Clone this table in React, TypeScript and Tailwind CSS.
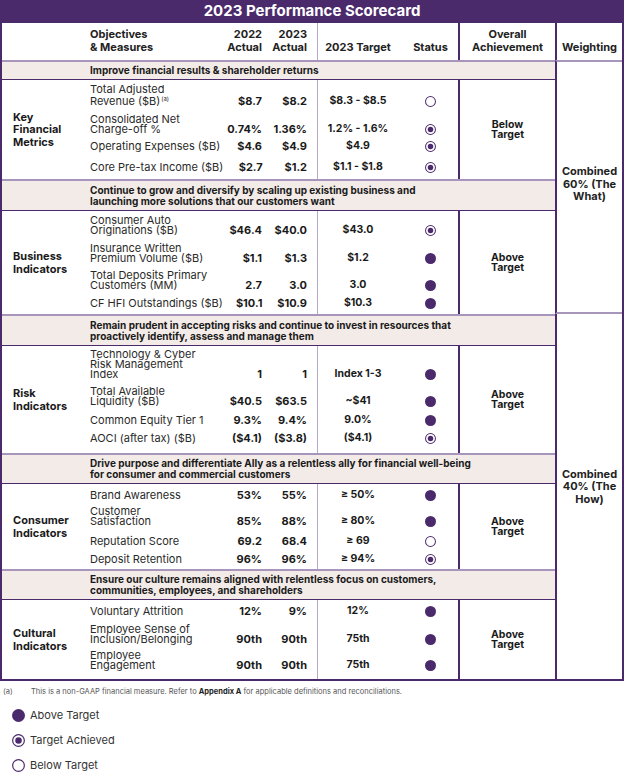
import React from "react";

type Status = "above" | "achieved" | "below";

interface Row {
  m: string[];
  sup?: string;
  a: string;
  b: string;
  t: string;
  s: Status;
  h: string;
}

interface Section {
  band: string[];
  bandH: string;
  cat: string[];
  overall: string[];
  pb: string;
  rows: Row[];
}

const sections: Section[] = [
  {
    band: ["Improve financial results & shareholder returns"],
    bandH: "h-[20px]",
    cat: ["Key", "Financial", "Metrics"],
    overall: ["Below", "Target"],
    pb: "pb-[5px]",
    rows: [
      { m: ["Total Adjusted", "Revenue ($B)"], sup: "(a)", a: "$8.7", b: "$8.2", t: "$8.3 - $8.5", s: "below", h: "h-[28px]" },
      { m: ["Consolidated Net", "Charge-off %"], a: "0.74%", b: "1.36%", t: "1.2% - 1.6%", s: "achieved", h: "h-[28px]" },
      { m: ["Operating Expenses ($B)"], a: "$4.6", b: "$4.9", t: "$4.9", s: "achieved", h: "h-[17px]" },
      { m: ["Core Pre-tax Income ($B)"], a: "$2.7", b: "$1.2", t: "$1.1 - $1.8", s: "achieved", h: "h-[21px]" },
    ],
  },
  {
    band: [
      "Continue to grow and diversify by scaling up existing business and",
      "launching more solutions that our customers want",
    ],
    bandH: "h-[32px]",
    cat: ["Business", "Indicators"],
    overall: ["Above", "Target"],
    pb: "pb-[4px]",
    rows: [
      { m: ["Consumer Auto", "Originations ($B)"], a: "$46.4", b: "$40.0", t: "$43.0", s: "achieved", h: "h-[26px]" },
      { m: ["Insurance Written", "Premium Volume ($B)"], a: "$1.1", b: "$1.3", t: "$1.2", s: "above", h: "h-[28px]" },
      { m: ["Total Deposits Primary", "Customers (MM)"], a: "2.7", b: "3.0", t: "3.0", s: "above", h: "h-[27px]" },
      { m: ["CF HFI Outstandings ($B)"], a: "$10.1", b: "$10.9", t: "$10.3", s: "above", h: "h-[18px]" },
    ],
  },
  {
    band: [
      "Remain prudent in accepting risks and continue to invest in resources that",
      "proactively identify, assess and manage them",
    ],
    bandH: "h-[32px]",
    cat: ["Risk", "Indicators"],
    overall: ["Above", "Target"],
    pb: "pb-[8px]",
    rows: [
      { m: ["Technology & Cyber", "Risk Management", "Index"], a: "1", b: "1", t: "Index 1-3", s: "above", h: "h-[35px]" },
      { m: ["Total Available", "Liquidity ($B)"], a: "$40.5", b: "$63.5", t: "~$41", s: "above", h: "h-[27px]" },
      { m: ["Common Equity Tier 1"], a: "9.3%", b: "9.4%", t: "9.0%", s: "above", h: "h-[19px]" },
      { m: ["AOCI (after tax) ($B)"], a: "($4.1)", b: "($3.8)", t: "($4.1)", s: "achieved", h: "h-[18px]" },
    ],
  },
  {
    band: [
      "Drive purpose and differentiate Ally as a relentless ally for financial well-being",
      "for consumer and commercial customers",
    ],
    bandH: "h-[31px]",
    cat: ["Consumer", "Indicators"],
    overall: ["Above", "Target"],
    pb: "pb-[3px]",
    rows: [
      { m: ["Brand Awareness"], a: "53%", b: "55%", t: "≥ 50%", s: "above", h: "h-[18px]" },
      { m: ["Customer", "Satisfaction"], a: "85%", b: "88%", t: "≥ 80%", s: "above", h: "h-[26px]" },
      { m: ["Reputation Score"], a: "69.2", b: "68.4", t: "≥ 69", s: "below", h: "h-[20px]" },
      { m: ["Deposit Retention"], a: "96%", b: "96%", t: "≥ 94%", s: "achieved", h: "h-[18px]" },
    ],
  },
  {
    band: [
      "Ensure our culture remains aligned with relentless focus on customers,",
      "communities, employees, and shareholders",
    ],
    bandH: "h-[31px]",
    cat: ["Cultural", "Indicators"],
    overall: ["Above", "Target"],
    pb: "pb-[7px]",
    rows: [
      { m: ["Voluntary Attrition"], a: "12%", b: "9%", t: "12%", s: "above", h: "h-[18px]" },
      { m: ["Employee Sense of", "Inclusion/Belonging"], a: "90th", b: "90th", t: "75th", s: "above", h: "h-[28px]" },
      { m: ["Employee", "Engagement"], a: "90th", b: "90th", t: "75th", s: "above", h: "h-[26px]" },
    ],
  },
];

function StatusIcon({ s, size = 11 }: { s: Status; size?: number }) {
  return (
    <svg width={size} height={size} viewBox="0 0 12 12" className="shrink-0">
      {s === "above" && <circle cx="6" cy="6" r="6" fill="#4b2a6c" />}
      {s === "achieved" && (
        <>
          <circle cx="6" cy="6" r="5.4" fill="none" stroke="#4b2a6c" strokeWidth="1.1" />
          <circle cx="6" cy="6" r="3" fill="#4b2a6c" />
        </>
      )}
      {s === "below" && <circle cx="6" cy="6" r="5.4" fill="none" stroke="#4b2a6c" strokeWidth="1.1" />}
    </svg>
  );
}

export default function App() {
  return (
    <div className="w-[624px] bg-white font-['Inter',sans-serif] text-[#222]">
      {/* Title */}
      <div className="h-[23px] bg-[#4b2a6c] flex items-center justify-center text-white font-bold text-[15px]">
        2023 Performance Scorecard
      </div>

      <div className="grid grid-cols-[85px_230px_141px_97px_1fr] border-x-2 border-b-2 border-[#4b2a6c]">
        {/* Header row */}
        <div className="h-[37px]" />
        <div className="flex items-end pb-[6px] pl-[3px] pr-[10px] font-bold text-[11px] leading-[13px]">
          <div className="flex-1">Objectives<br />&amp; Measures</div>
          <div className="w-[40px] text-right">2022<br />Actual</div>
          <div className="w-[45px] text-right">2023<br />Actual</div>
        </div>
        <div className="flex items-end pb-[6px] border-l border-[#b6a8c8] font-bold text-[11px] leading-[13px]">
          <div className="w-[80px] text-center">2023 Target</div>
          <div className="flex-1 text-center pl-[5px]">Status</div>
        </div>
        <div className="flex items-end justify-center pb-[6px] border-l-2 border-[#4b2a6c] font-bold text-[11px] leading-[13px] text-center">
          Overall<br />Achievement
        </div>
        <div className="flex items-end justify-center pb-[6px] border-l-2 border-[#4b2a6c] font-bold text-[11px] leading-[13px]">
          Weighting
        </div>

        {/* Weighting groups */}
        <div className="col-start-5 row-start-2 row-span-4 border-l-2 border-l-[#4b2a6c] border-t-2 border-t-[#a895bb] border-b-2 border-b-[#a895bb] flex items-center justify-center pb-[6px] text-center font-bold text-[11px] leading-[12.5px]">
          Combined<br />60% (The<br />What)
        </div>
        <div className="col-start-5 row-start-6 row-span-6 border-l-2 border-l-[#4b2a6c] flex items-center justify-center pb-[20px] text-center font-bold text-[11px] leading-[12.5px]">
          Combined<br />40% (The<br />How)
        </div>

        {sections.map((sec, i) => (
          <React.Fragment key={i}>
            {/* Band */}
            <div
              className={`col-span-4 col-start-1 ${sec.bandH} bg-[#f3ebe8] border-t-2 border-t-[#a895bb] border-b border-b-[#4b2a6c] flex flex-col justify-center pl-[88px] font-bold text-[10px] leading-[11px] text-[#1a1a1a]`}
            >
              {sec.band.map((l) => (
                <div key={l}>{l}</div>
              ))}
            </div>

            {/* Category */}
            <div className="col-start-1 flex flex-col justify-center pl-[11px] font-bold text-[11px] leading-[12.5px] text-[#1a1a1a]">
              {sec.cat.map((c) => (
                <div key={c}>{c}</div>
              ))}
            </div>

            {/* Measures + actuals */}
            <div className={`flex flex-col ${sec.pb}`}>
              {sec.rows.map((r, j) => (
                <div key={j} className={`${r.h} flex items-end pb-[2px] pl-[3px] pr-[10px]`}>
                  <div className="flex-1 whitespace-nowrap text-[11px] leading-[10px] text-[#2a2a2a]">
                    {r.m.map((l, k) => (
                      <div key={k}>
                        {l}
                        {k === r.m.length - 1 && r.sup && <span className="text-[6px] align-[4px] ml-[1px]">{r.sup}</span>}
                      </div>
                    ))}
                  </div>
                  <div className="w-[40px] text-right font-bold text-[11px] leading-[10px] text-[#1a1a1a]">{r.a}</div>
                  <div className="w-[45px] text-right font-bold text-[11px] leading-[10px] text-[#1a1a1a]">{r.b}</div>
                </div>
              ))}
            </div>

            {/* Target + status */}
            <div className={`flex flex-col ${sec.pb} border-l border-[#b6a8c8]`}>
              {sec.rows.map((r, j) => (
                <div key={j} className={`${r.h} flex items-end pb-[2px]`}>
                  <div className="w-[80px] text-center font-bold text-[10.5px] leading-[10px] text-[#1a1a1a]">{r.t}</div>
                  <div className="flex-1 pl-[5px] h-[10px] flex items-center justify-center">
                    <StatusIcon s={r.s} />
                  </div>
                </div>
              ))}
            </div>

            {/* Overall */}
            <div className="border-l-2 border-[#4b2a6c] flex items-center justify-center text-center font-bold text-[10.5px] leading-[10px] text-[#1a1a1a]">
              <div>
                {sec.overall.map((o) => (
                  <div key={o}>{o}</div>
                ))}
              </div>
            </div>
          </React.Fragment>
        ))}
      </div>

      {/* Footnote */}
      <div className="flex items-center mt-[6px] text-[7.5px] text-[#555] leading-[10px]">
        <span className="w-[31px] pl-[3px]">(a)</span>
        <span>
          This is a non-GAAP financial measure. Refer to <span className="font-bold text-[#222]">Appendix A</span> for
          applicable definitions and reconciliations.
        </span>
      </div>

      {/* Legend */}
      <div className="flex flex-col gap-[11px] mt-[11px] pl-[12px] text-[11px] text-[#333]">
        {[
          { s: "above" as Status, l: "Above Target" },
          { s: "achieved" as Status, l: "Target Achieved" },
          { s: "below" as Status, l: "Below Target" },
        ].map((it) => (
          <div key={it.l} className="flex items-center gap-[5px] h-[14px]">
            <StatusIcon s={it.s} size={13} />
            <span>{it.l}</span>
          </div>
        ))}
      </div>
    </div>
  );
}
